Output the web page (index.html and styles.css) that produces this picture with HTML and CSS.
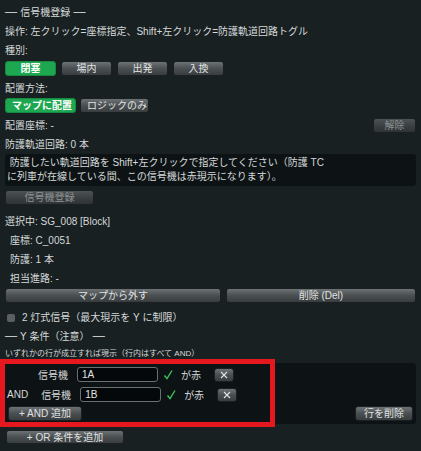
FILE: index.html
```html
<!DOCTYPE html>
<html lang="ja">
<head>
  <meta charset="UTF-8" />
  <meta name="viewport" content="width=device-width, initial-scale=1.0"/>
  <title>信号機登録</title>
  <link rel="stylesheet" href="styles.css">
</head>
<body>

  <div class="panel">
    <div class="line heading">── 信号機登録 ──</div>
    <div class="line">操作: 左クリック=座標指定、Shift+左クリック=防護軌道回路トグル</div>

    <div class="line">種別:</div>
    <div class="btn-row">
      <button class="btn kind active">閉塞</button>
      <button class="btn kind">場内</button>
      <button class="btn kind">出発</button>
      <button class="btn kind">入換</button>
    </div>

    <div class="line spaced">配置方法:</div>
    <div class="btn-row">
      <button class="btn active place">マップに配置</button>
      <button class="btn logic">ロジックのみ</button>
    </div>

    <div class="line split spaced">
      <span>配置座標: -</span>
      <button class="btn disabled clear">解除</button>
    </div>
    <div class="line">防護軌道回路: 0 本</div>

    <div class="note">&nbsp;防護したい軌道回路を Shift+左クリックで指定してください（防護 TC<br>に列車が在線している間、この信号機は赤現示になります）。</div>
    <button class="btn disabled register">信号機登録</button>

    <div class="line selected">選択中: SG_008 [Block]</div>
    <div class="line indent">座標: C_0051</div>
    <div class="line indent">防護: 1 本</div>
    <div class="line indent">担当進路: -</div>

    <div class="btn-row stretch">
      <button class="btn">マップから外す</button>
      <button class="btn">削除 (Del)</button>
    </div>

    <div class="line check-row">
      <span class="checkbox"></span>
      <span>2 灯式信号（最大現示を Y に制限）</span>
    </div>

    <div class="line heading">── Y 条件（注意） ──</div>
    <div class="hint">いずれかの行が成立すれば現示（行内はすべて AND）</div>

    <div class="cond">
      <div class="cond-row">
        <span class="prefix"></span>
        <span class="src">信号機</span>
        <input class="field" type="text" value="1A">
        <svg class="ok" width="10" height="11" viewBox="0 0 10 11"><path d="M1.5 6.5 L4 9.5 L9 1.5" fill="none" stroke="#3fc05a" stroke-width="1.4"/></svg>
        <span class="aspect">が赤</span>
        <button class="btn remove"><svg width="8" height="8" viewBox="0 0 8 8"><path d="M1 1 L7 7 M7 1 L1 7" stroke="#e2e4e4" stroke-width="1.1"/></svg></button>
      </div>
      <div class="cond-row">
        <span class="prefix">AND</span>
        <span class="src">信号機</span>
        <input class="field" type="text" value="1B">
        <svg class="ok" width="10" height="11" viewBox="0 0 10 11"><path d="M1.5 6.5 L4 9.5 L9 1.5" fill="none" stroke="#3fc05a" stroke-width="1.4"/></svg>
        <span class="aspect">が赤</span>
        <button class="btn remove"><svg width="8" height="8" viewBox="0 0 8 8"><path d="M1 1 L7 7 M7 1 L1 7" stroke="#e2e4e4" stroke-width="1.1"/></svg></button>
      </div>
      <div class="cond-foot">
        <button class="btn add-and">+ AND 追加</button>
        <button class="btn drop-row">行を削除</button>
      </div>
    </div>

    <button class="btn add-or">+ OR 条件を追加</button>
  </div>

  <!-- highlight frame over the condition rows -->
  <div class="callout"></div>

</body>
</html>
```

FILE: styles.css
```css
* {
  box-sizing: border-box;
}

body {
  margin: 0;
  padding: 3px 5px;
  height: 451px;
  overflow: hidden;
  position: relative;
  background-color: #182022;
  color: #d6d9d9;
  font-family: "Liberation Sans", "Noto Sans CJK JP", sans-serif;
  font-size: 10px;
}

.line {
  height: 19px;
  line-height: 19px;
  white-space: nowrap;
}

.heading {
  font-family: "DejaVu Sans", "Noto Sans CJK JP", sans-serif;
}

.spaced {
  margin-top: 3px;
}

.split {
  display: flex;
  justify-content: space-between;
  align-items: center;
}

.indent {
  padding-left: 5px;
}

.selected {
  margin-top: 7px;
}

/* buttons */

.btn {
  font: inherit;
  color: #e0e2e2;
  height: 15px;
  padding: 0 6px;
  line-height: 13px;
  border: 1px solid #1b2022;
  border-radius: 3px;
  background: linear-gradient(#6d7274, #4a4f51 50%, #393d3f);
  text-align: center;
  white-space: nowrap;
}

.btn.active {
  background: #1ca750;
  border-color: #168a41;
  color: #ffffff;
  font-weight: bold;
}

.btn.disabled {
  background: linear-gradient(#4d5254, #3a3f41 55%, #2f3335);
  color: #8d9293;
}

.btn-row {
  display: flex;
  gap: 5px;
}

.btn-row + .btn-row,
.line + .btn-row {
  margin-top: 0;
}

.kind {
  width: 51px;
  margin-top: 1px;
}

.place {
  width: 71px;
}

.logic {
  width: 69px;
  margin-left: -1px;
}

.clear {
  width: 43px;
}

.note {
  background-color: #0d1315;
  border-radius: 3px;
  padding: 2px 2px;
  height: 32px;
  line-height: 14px;
  white-space: nowrap;
}

.register {
  display: block;
  width: 89px;
  margin-top: 4px;
}

.stretch .btn {
  flex: 1 1 auto;
}

.check-row {
  display: flex;
  align-items: center;
  margin-top: 5px;
}

.checkbox {
  width: 8px;
  height: 8px;
  margin: 0 7px 0 2px;
  border-radius: 2px;
  background-color: #5b5f61;
}

.hint {
  height: 16px;
  line-height: 16px;
  font-size: 8px;
  white-space: nowrap;
}

/* condition rows */

.cond {
  margin-top: 1px;
  height: 61px;
  padding: 4px 3px 3px 2px;
  background-color: #0d1315;
  border-radius: 3px;
}

.cond-row {
  display: flex;
  align-items: center;
  height: 15px;
}

.cond-row + .cond-row {
  margin-top: 5px;
}

.prefix {
  min-width: 18px;
  margin-right: 13px;
}

.src {
  width: 30px;
  margin-right: 9px;
}

.field {
  width: 81px;
  height: 15px;
  padding: 0 4px;
  font: inherit;
  color: #e2e4e4;
  background-color: #05080a;
  border: 1px solid #6a6f71;
  border-radius: 3px;
  outline: none;
}

.ok {
  margin-left: 5px;
}

.aspect {
  margin-left: 8px;
}

.remove {
  width: 20px;
  height: 14px;
  padding: 0;
  margin-left: 13px;
  display: flex;
  align-items: center;
  justify-content: center;
}

.cond-foot {
  display: flex;
  justify-content: space-between;
  margin-top: 4px;
}

.add-and {
  width: 74px;
  margin-left: 1px;
}

.drop-row {
  width: 58px;
}

.add-or {
  display: block;
  width: 118px;
  height: 14px;
  margin: 6px 0 0 1px;
}

.callout {
  position: absolute;
  left: 0;
  top: 359px;
  width: 275px;
  height: 68px;
  border: 5px solid #e5171f;
}
```
